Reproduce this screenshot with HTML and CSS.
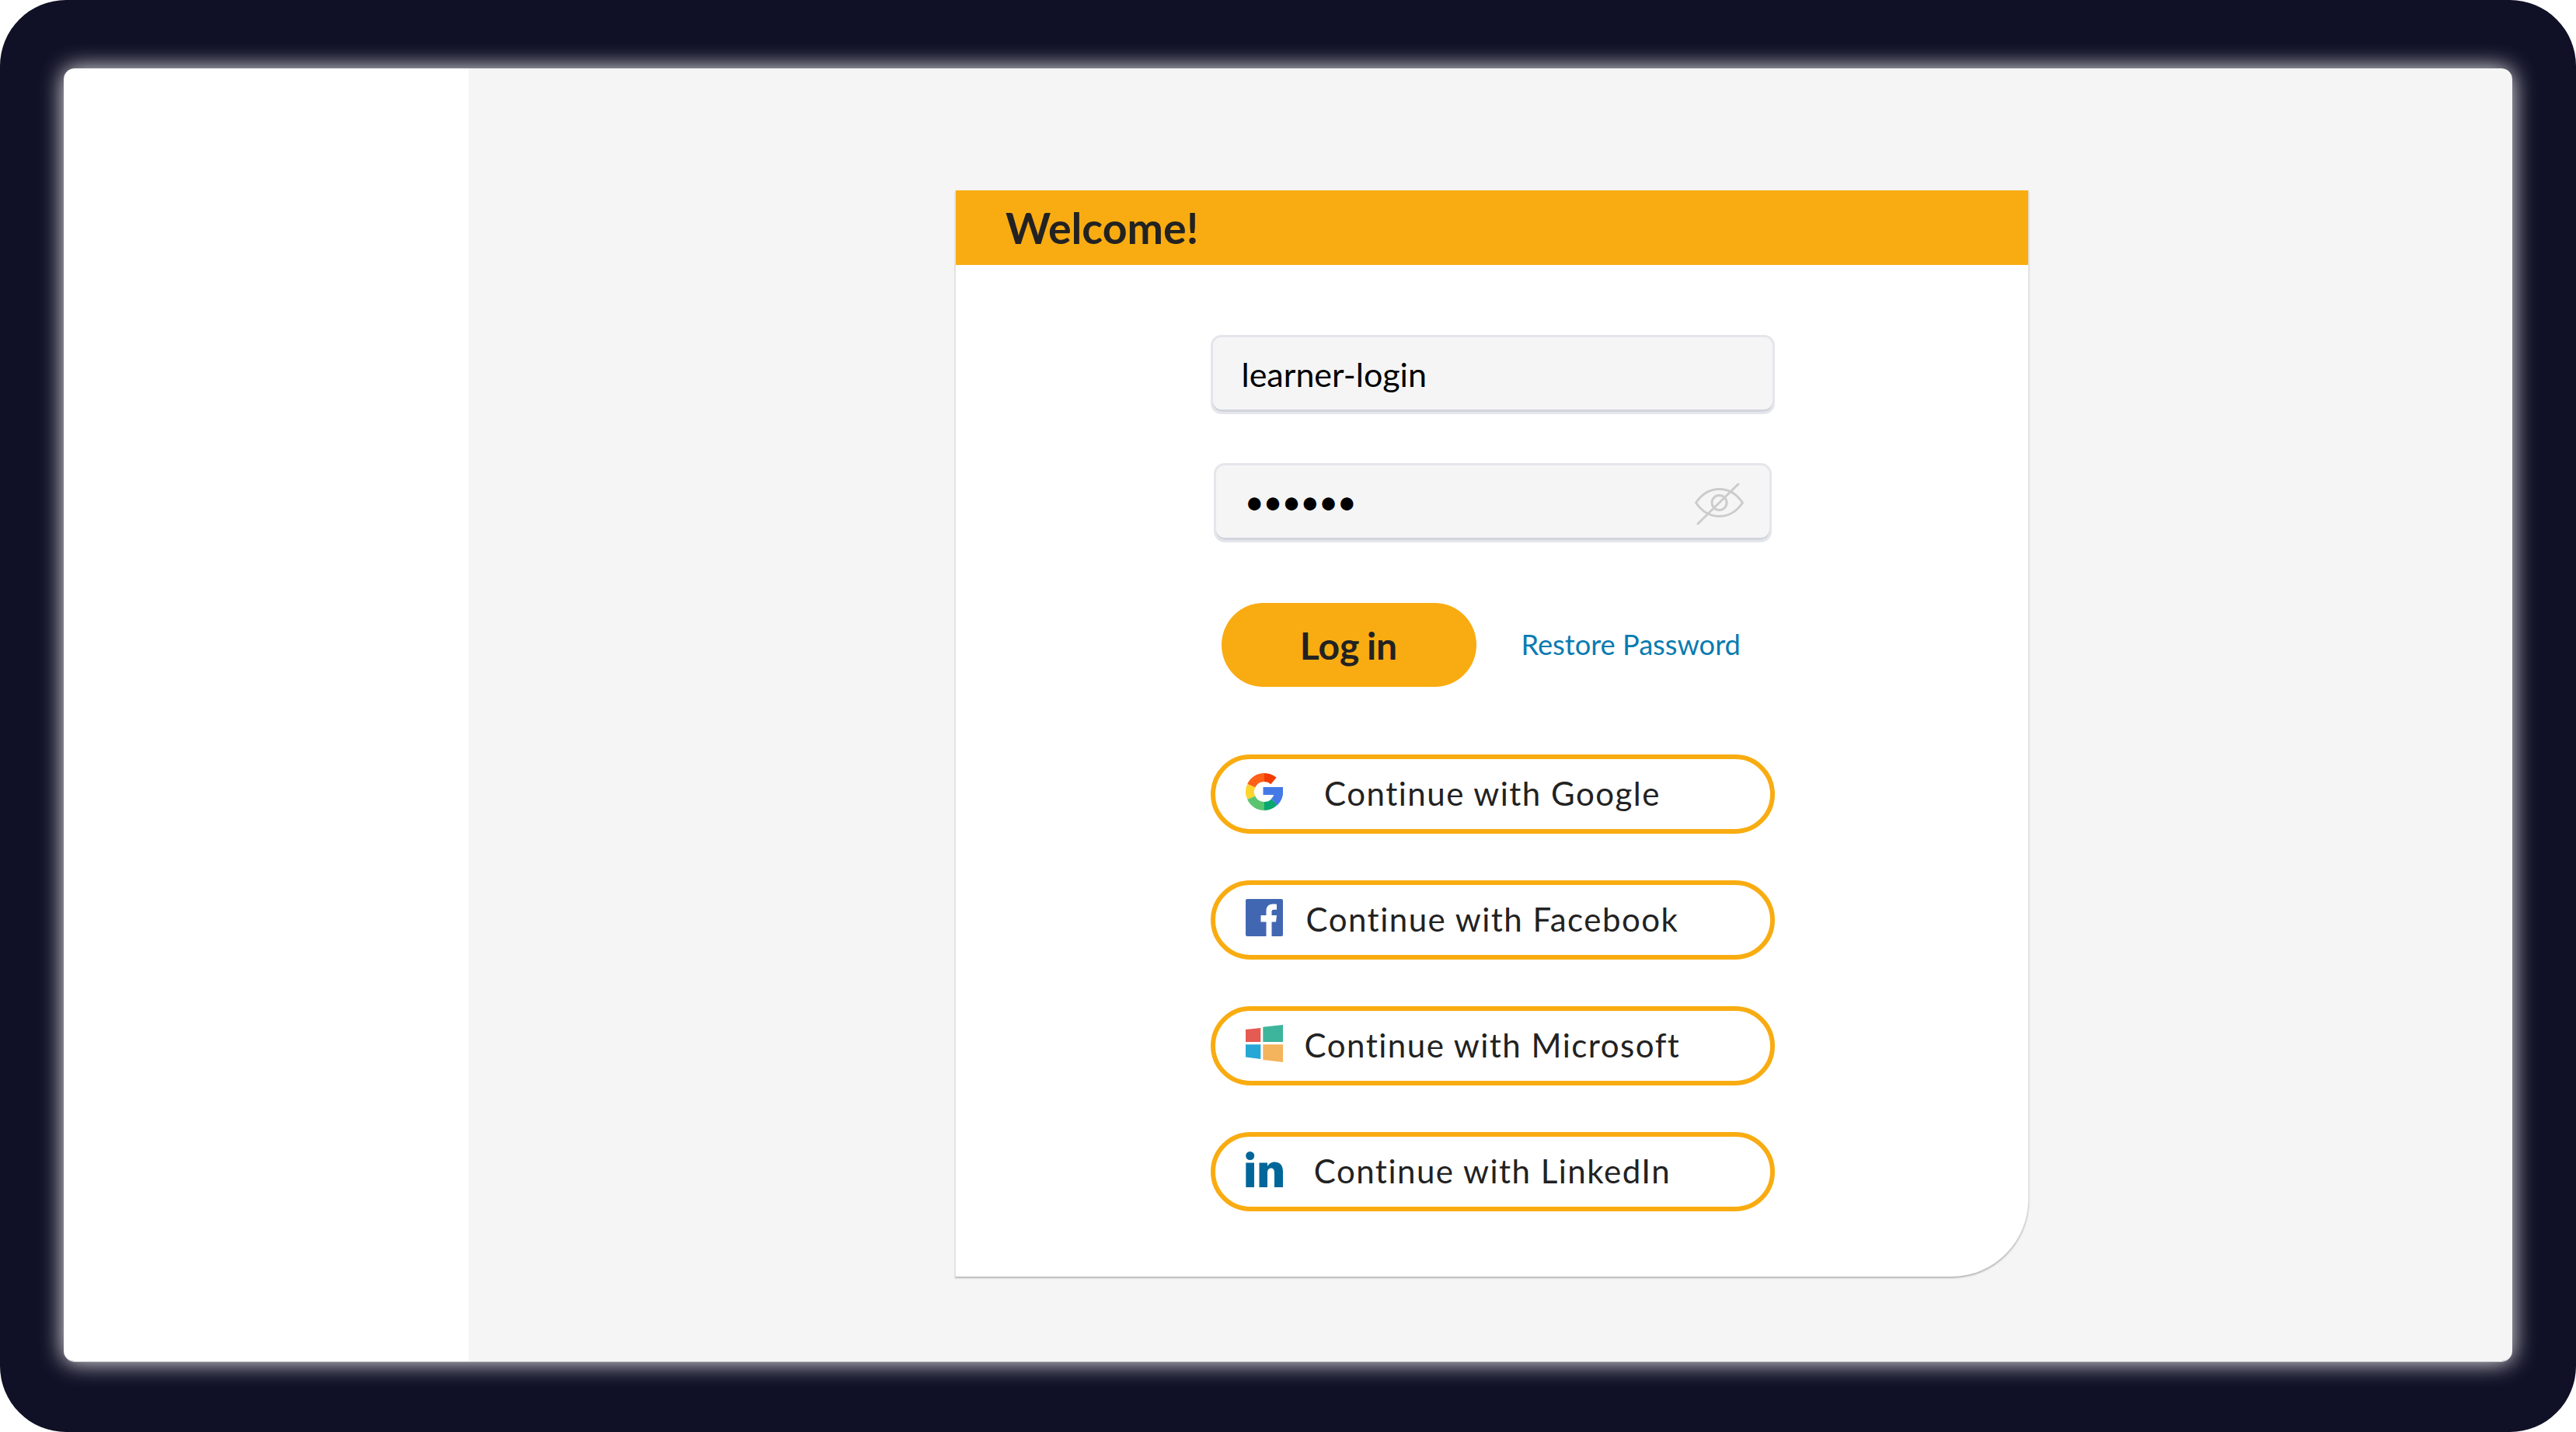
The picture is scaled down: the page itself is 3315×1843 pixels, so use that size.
FILE: index.html
```html
<!DOCTYPE html>
<html lang="en">
<head>
  <meta charset="UTF-8">
  <meta name="viewport" content="width=device-width, initial-scale=1.0">
  <title>Welcome</title>
  <link rel="stylesheet" href="styles.css">
</head>
<body>
  <div class="frame">
    <div class="window">
      <aside class="sidebar"></aside>
      <main class="main">
        <section class="card">
          <h1 class="card-title">Welcome!</h1>
          <form class="login-form">
            <input class="field" type="text" value="learner-login">

            <div class="field-password">
              <input class="field field-narrow" type="password" value="secret">
              <svg class="eye-icon" viewBox="0 0 64 54" fill="none" stroke="#cccccc" stroke-width="3">
                <path d="M1.5 25C9 14 19 7.5 31.500 7.500S54 14 61.500 25C54 36 44 42.500 31.500 42.500S9 36 1.500 25z"/>
                <circle cx="31.500" cy="25" r="9.500"/>
                <path d="M4 52L56 1" stroke-linecap="round"/>
              </svg>
            </div>

            <div class="login-row">
              <button class="btn-login" type="button">Log in</button>
              <a class="restore-link" href="#">Restore Password</a>
            </div>

            <div class="social-list">
              <button class="btn-social" type="button">
                <svg class="social-icon" viewBox="0 0 48 48" fill="none" stroke-width="11">
                  <path d="M24 5.500A18.500 18.500 0 0 1 36 10" stroke="#f23c00"/>
                  <path d="M7.200 16.200A18.500 18.500 0 0 1 24 5.500" stroke="#ff6119"/>
                  <path d="M7.200 16.200A18.500 18.500 0 0 0 7.200 31.800" stroke="#fdd52f"/>
                  <path d="M7.200 31.800A18.500 18.500 0 0 0 24 42.500" stroke="#5bc46f"/>
                  <path d="M24 42.500A18.500 18.500 0 0 0 37 37" stroke="#0aa770"/>
                  <path d="M37 37A18.500 18.500 0 0 0 42.500 24" stroke="#4479e6"/>
                  <path d="M22.500 18H48V24C48 30 46 36 41 41L33 33C35 31.500 36 30 36.500 28H22.500z" fill="#4479e6" stroke="none"/>
                </svg>
                <span>Continue with Google</span>
              </button>

              <button class="btn-social" type="button">
                <svg class="social-icon" viewBox="0 0 48 48">
                  <rect width="48" height="48" rx="2" fill="#4267b2"/>
                  <path d="M26.500 48V29.500H19.500V21H26.500V15C26.500 9.500 30 6.500 35 6.500C37.500 6.500 39.500 6.700 40 6.800V13.800H36.500C34 13.800 33.500 15 33.500 16.800V21H40L39 29.500H33.500V48z" fill="#fff"/>
                </svg>
                <span>Continue with Facebook</span>
              </button>

              <button class="btn-social" type="button">
                <svg class="social-icon" viewBox="0 0 48 48">
                  <path d="M0 6L19.300 4V22H0z" fill="#e55a52"/>
                  <path d="M22.300 2.700L48 0V22H22.300z" fill="#3db59c"/>
                  <path d="M0 25.300H19.300V44L0 41.500z" fill="#26a7d6"/>
                  <path d="M22.300 25.300H48V48L22.300 45z" fill="#f4b35d"/>
                </svg>
                <span>Continue with Microsoft</span>
              </button>

              <button class="btn-social" type="button">
                <svg class="social-icon" viewBox="0 0 48 46">
                  <circle cx="5.700" cy="5.500" r="5.500" fill="#006699"/>
                  <rect x="0.300" y="14.500" width="10.700" height="31.500" fill="#006699"/>
                  <path d="M17.500 14.500H28V19C29.500 16 33 13.500 37 13.500C45 13.500 48 18.500 48 26V46H37V28C37 24 36 21.500 32.800 21.500C29.300 21.500 28 24 28 28V46H17.500z" fill="#006699"/>
                </svg>
                <span>Continue with LinkedIn</span>
              </button>
            </div>
          </form>
        </section>
      </main>
    </div>
  </div>
</body>
</html>
```

FILE: styles.css
```css
:root {
  --navy: #101026;
  --amarelo: #f9ac11;
  --cinza-fundo: #f5f5f5;
  --texto: #222222;
  --azul-link: #0a7bb0;
}

* {
  box-sizing: border-box;
}

body {
  margin: 0;
  background-color: #ffffff;
  font-family: 'Lato', 'Open Sans', sans-serif;
  color: var(--texto);
}

.frame {
  width: 3315px;
  height: 1843px;
  padding: 88px 82px 90px 82px;
  background-color: var(--navy);
  border-radius: 85px;
}

.window {
  display: flex;
  height: 100%;
  border-radius: 14px;
  overflow: hidden;
  box-shadow: 0 0 30px rgba(255, 255, 255, 0.95);
  border-bottom: 1px solid #cccccc;
}

.sidebar {
  width: 521px;
  background-color: #ffffff;
}

.main {
  flex: 1;
  padding: 157px 0 0 627px;
  background-color: var(--cinza-fundo);
}

.card {
  width: 1382px;
  margin-left: -1px;
  background-color: #ffffff;
  border-left: 1px solid #e2e2e2;
  border-right: 1px solid #e2e2e2;
  border-bottom-right-radius: 100px;
  box-shadow: 0 2px 2px rgba(0, 0, 0, 0.25);
}

.card-title {
  margin: 0;
  height: 96px;
  padding-left: 64px;
  background-color: var(--amarelo);
  font-size: 55.500px;
  font-weight: 700;
  line-height: 96px;
}

.login-form {
  display: flex;
  flex-direction: column;
  align-items: center;
  padding: 90px 0 84px 1px;
}

.field {
  display: block;
  width: 726px;
  height: 102px;
  padding: 0 37px 2px 37px;
  border: 3px solid #e5e6eb;
  border-radius: 14px;
  background-color: #f5f5f6;
  box-shadow: inset 0 -3px 0 #d2d5dc;
  font-family: inherit;
  font-size: 43px;
  color: #000000;
  outline: none;
}

.field-password {
  position: relative;
  margin-top: 63px;
}

.field-narrow {
  width: 718px;
}

.field-narrow[type="password"] {
  padding-bottom: 4px;
  font-size: 44px;
  letter-spacing: -1.700px;
}

.eye-icon {
  position: absolute;
  top: 26px;
  right: 35px;
  width: 64px;
  height: 54px;
}

.login-row {
  display: flex;
  align-items: center;
  gap: 58px;
  width: 726px;
  margin-top: 78px;
  padding-left: 14px;
}

.btn-login {
  width: 328px;
  height: 108px;
  border: none;
  border-radius: 54px;
  background-color: var(--amarelo);
  font-family: inherit;
  font-size: 48px;
  font-weight: 700;
  word-spacing: -2px;
  color: var(--texto);
}

.restore-link {
  margin-top: -2px;
  font-size: 36.200px;
  color: var(--azul-link);
  text-decoration: none;
}

.social-list {
  display: flex;
  flex-direction: column;
  gap: 60px;
  margin-top: 87px;
}

.btn-social {
  display: grid;
  grid-template-columns: 1fr auto 1fr;
  align-items: center;
  width: 726px;
  height: 102px;
  padding: 0 39px 2px 39px;
  border: 6px solid var(--amarelo);
  border-radius: 51px;
  background-color: #ffffff;
  font-family: inherit;
  font-size: 42px;
  letter-spacing: 1.500px;
  color: var(--texto);
}

.social-icon {
  width: 48px;
  height: 48px;
  margin-bottom: 4px;
}
```
